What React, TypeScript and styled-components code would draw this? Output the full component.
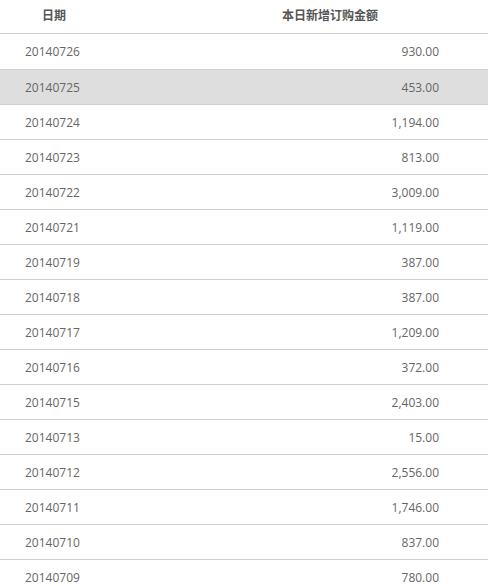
import React from "react";
import styled, { createGlobalStyle } from "styled-components";

const Global = createGlobalStyle`
  html, body { margin: 0; padding: 0; background: #fff; }
  body { font-family: "Open Sans", "Noto Sans CJK SC", sans-serif; }
`;

const Table = styled.div`
  width: 488px;
  display: flex;
  flex-direction: column;
  font-size: 12px;
  color: #666;
`;

const HeaderRow = styled.div`
  display: grid;
  grid-template-columns: 108px 1fr;
  height: 34px;
  align-items: center;
  border-bottom: 1px solid #cfcfcf;
  box-sizing: border-box;
  padding-bottom: 4px;
`;

const HeadCell = styled.div<{ $offset?: number }>`
  text-align: center;
  padding-left: ${(p) => p.$offset ?? 0}px;
  font-family: "Noto Sans CJK SC", sans-serif;
  font-weight: 700;
  color: #555;
  font-size: 12px;
`;

const Row = styled.div<{ $active?: boolean }>`
  display: grid;
  grid-template-columns: 108px 1fr;
  height: 35px;
  box-sizing: border-box;
  align-items: center;
  border-bottom: 1px solid #cfcfcf;
  background: ${(p) => (p.$active ? "#dedede" : "#fff")};
  &:first-of-type { height: 36px; }
`;

const DateCell = styled.div`
  padding-left: 25px;
`;

const AmountCell = styled.div`
  text-align: right;
  padding-right: 49px;
`;

const rows: [string, string][] = [
  ["20140726", "930.00"],
  ["20140725", "453.00"],
  ["20140724", "1,194.00"],
  ["20140723", "813.00"],
  ["20140722", "3,009.00"],
  ["20140721", "1,119.00"],
  ["20140719", "387.00"],
  ["20140718", "387.00"],
  ["20140717", "1,209.00"],
  ["20140716", "372.00"],
  ["20140715", "2,403.00"],
  ["20140713", "15.00"],
  ["20140712", "2,556.00"],
  ["20140711", "1,746.00"],
  ["20140710", "837.00"],
  ["20140709", "780.00"],
];

const Body = styled.div`
  display: flex;
  flex-direction: column;
`;

export default function App() {
  return (
    <>
      <Global />
      <Table>
        <HeaderRow>
          <HeadCell>日期</HeadCell>
          <HeadCell $offset={64}>本日新增订购金额</HeadCell>
        </HeaderRow>
        <Body>
          {rows.map(([d, a], i) => (
            <Row key={d} $active={i === 1}>
              <DateCell>{d}</DateCell>
              <AmountCell>{a}</AmountCell>
            </Row>
          ))}
        </Body>
      </Table>
    </>
  );
}
